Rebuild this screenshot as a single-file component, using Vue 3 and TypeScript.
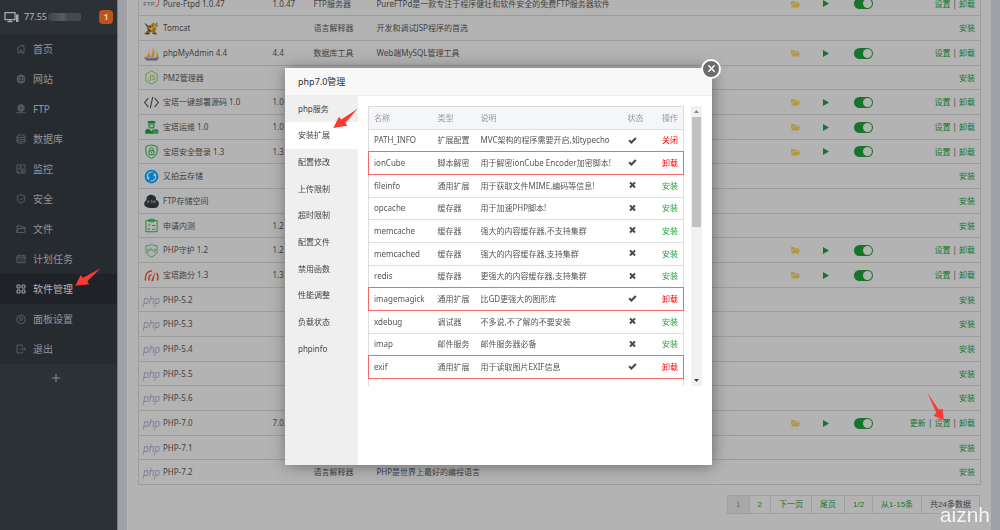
<script setup lang="ts">
interface NavItem { label: string; icon: string; active?: boolean }
interface Software {
  name: string
  icon: string
  version?: string
  type?: string
  desc?: string
  installed?: boolean
  update?: boolean
}
interface Extension { name: string; type: string; desc: string; on: boolean; action: string; marked?: boolean }

const navIcons: Record<string, string> = {
  home: '<path d="M1.500 9.500 10 2l3.500 3V2.800h2V7l3 2.500M4 8.500V18h4v-5h4v5h4V8.500"/>',
  globe: '<circle cx="10" cy="10" r="8"/><ellipse cx="10" cy="10" rx="3.800" ry="8"/><path d="M2 10h16M3.500 5.500h13M3.500 14.500h13"/>',
  ftp: '<circle cx="10" cy="8" r="6.500"/><ellipse cx="10" cy="8" rx="3" ry="6.500"/><path d="M3.500 8h13M5 4.500h10M5 11.500h10M10 15v3M0.500 17.500h19"/>',
  database: '<ellipse cx="10" cy="4.500" rx="8" ry="2.800"/><path d="M2 4.500v11c0 4 16 4 16 0v-11M2 8.500c0 3.500 16 3.500 16 0M2 12.200c0 3.500 16 3.500 16 0"/>',
  monitor: '<path d="M2 2h16v16H2zM4 10h3l2-5 3 9 2-4h2M4 15.500h3M10 15.500h6"/>',
  shield: '<path d="M10 1.500 17.500 4v6c0 4-3.500 7-7.500 8.500C6 17 2.500 14 2.500 10V4zM6.500 9.500 9.500 12.500 14.500 7"/>',
  folder: '<path d="M2 17V3.500h6l2 2.500h7v3M2 17 4.500 9H19l-2 8z"/>',
  calendar: '<path d="M2 3.500h16v14H2zM2 7.500h16M6 1.500v4M14 1.500v4M5 11h2M9 11h2M13 11h2M5 14.500h2M9 14.500h2M13 14.500h2"/>',
  apps: '<path d="M2 2h6v6H2zM12 2h6v6h-6zM2 12h6v6H2zM12 12h6v6h-6z"/>',
  gear: '<circle cx="10" cy="10" r="3"/><path d="m8.500 1.500h3l.5 2.500 2 .8 2-1.300 2 2-1.300 2 .8 2 2 .5v2l-2 .5-.8 2 1.300 2-2 2-2-1.300-2 .8-.5 2h-3l-.5-2-2-.8-2 1.300-2-2 1.300-2-.8-2-2-.5v-2l2-.5.8-2-1.300-2 2-2 2 1.300 2-.8z"/>',
  exit: '<path d="M13 5V2H2v16h11v-3M8 10h11M15.500 6.500 19 10l-3.500 3.500"/>',
}

const nav: NavItem[] = [
  { label: '首页', icon: 'home' },
  { label: '网站', icon: 'globe' },
  { label: 'FTP', icon: 'ftp' },
  { label: '数据库', icon: 'database' },
  { label: '监控', icon: 'monitor' },
  { label: '安全', icon: 'shield' },
  { label: '文件', icon: 'folder' },
  { label: '计划任务', icon: 'calendar' },
  { label: '软件管理', icon: 'apps', active: true },
  { label: '面板设置', icon: 'gear' },
  { label: '退出', icon: 'exit' },
]

const appIcons: Record<string, string> = {
  tomcat: '<path d="M2 4l5 3 5-1 3-4 2 3 4-3 1 6-3 4-1 5 4 4h-5l-3-4-4 1-3 4H2l4-6-1-5z" fill="#8c6a2c"/><path d="M15 5l3 1 2-1v4l-3 2-3-2zM8 11l4-2 3 3-4 3z" fill="#c39a4e"/><path d="M2 4l4 5M1 21l6-6M9 8l2 3M13 19l6 2M15 7v1M19 7v1M7 12l3 5M4 20h5" stroke="#29231b" stroke-width="1.400" fill="none"/>',
  sail: '<path d="M8 4C9 10 7 15 2 18h8zM13 1c2 7 1 12-3 17h6c2-6 0-12-3-17zM18 4c3 5 3 9 1 14h4c0-6-2-10-5-14z" fill="#c08423"/><path d="M0 18c8 2 15 1 24 0l-3 5H4z" fill="#4c587b"/><path d="M3 20.500h18" stroke="#8a90a8" fill="none"/>',
  node: '<path d="M12 1.500 21 6.500v11L12 22.500l-9-5v-11z" fill="none" stroke="#6b9a3d" stroke-width="1.600"/><path d="M10.500 7v8.500c0 2-3 2-3.500 0M17.500 9.500c-1-1.500-4-1.500-4 .5s4 1.500 4 3.700-3.500 2.300-4.500.3" fill="none" stroke="#6b9a3d" stroke-width="1.600"/>',
  code: '<path d="M7 5 1 12l6 7M17 5l6 7-6 7M14 3l-4 18" fill="none" stroke="#3e3e3e" stroke-width="1.800"/>',
  worker: '<path d="M6 2l6-1 6 1v3H6zM7 6h10v3c0 6-10 6-10 0zM2 22v-4c0-3 3-4 6-4l4 4 4-4c3 0 6 1 6 4v4z" fill="#17742b"/><path d="M8.500 7h7v2c-1 4-6 4-7 0z" fill="#a3aaa4"/><circle cx="19.500" cy="18.500" r="4" fill="#17742b" stroke="#b3b3b3"/><path d="m17.500 18.500 1.500 1.500 2.500-3" fill="none" stroke="#b3b3b3"/>',
  lock: '<path d="M12 1.500 21 4v8c0 6-5 9-9 11-4-2-9-5-9-11V4zM8 11h8v6H8zM9.500 11V8.500c0-3.500 5-3.500 5 0V11M12 13v2" fill="none" stroke="#278039" stroke-width="1.600"/>',
  upyun: '<circle cx="12" cy="12" r="11" fill="#087bc0"/><path d="M14 5C7 4 3 10 7 16M10 19c7 1 11-5 7-11" fill="none" stroke="#a9c0ce" stroke-width="1.800"/><path d="M4 14l4 4 1-6zM20 10l-4-4-1 6z" fill="#a9c0ce"/>',
  cloud: '<path d="M5 21c-6-1-6-9-1-11C3 3 10 0 14 2c5 1 6 5 5 7 6 2 6 9 2 12-4 2-12 2-16 0z" fill="#292d31"/><path d="M6 11h3M6 13h2M6 11v4M11 11h3M12.500 11v4M16 15v-4h2v2h-2" fill="none" stroke="#999" stroke-width="1"/>',
  clipboard: '<path d="M3 4h18v18H3zM8 2h8v4H8z" fill="none" stroke="#278039" stroke-width="1.500"/><path d="m6 11 1.500 1.500L10 9.500M13 12h5M6 16l3 3M9 16l-3 3M13 18h5" fill="none" stroke="#278039" stroke-width="1.400"/>',
  guard: '<path d="M12 1.500 15 4l6 .5v8c0 5-4 8-9 10-5-2-9-5-9-10v-8L9 4z" fill="none" stroke="#489458" stroke-width="1.600"/><path d="M6 16v-6h2.500c1 0 1 3 0 3H6M11 7v6m0-3c2-1 2.500 0 2.500 3M16 16v-6h2.500c1 0 1 3 0 3H16" fill="none" stroke="#489458" stroke-width="1.200"/>',
  gauge: '<path d="M2.500 20C1 11 6 4 13 5M20 8c3 4 2.500 9 1.500 12M8 20c-1-5 0-8 4-10" fill="none" stroke="#b43b19" stroke-width="2.200"/><path d="M18 5 15 20c-1 2-4 1-3-1z" fill="#b43b19"/>',
}

const software: Software[] = [
  { name: 'Pure-Ftpd 1.0.47', icon: 'ftp', version: '1.0.47', type: 'FTP服务器', desc: 'PureFTPd是一款专注于程序健壮和软件安全的免费FTP服务器软件', installed: true },
  { name: 'Tomcat', icon: 'tomcat', type: '语言解释器', desc: '开发和调试JSP程序的首选' },
  { name: 'phpMyAdmin 4.4', icon: 'sail', version: '4.4', type: '数据库工具', desc: 'Web端MySQL管理工具', installed: true },
  { name: 'PM2管理器', icon: 'node' },
  { name: '宝塔一键部署源码 1.0', icon: 'code', version: '1.0', installed: true },
  { name: '宝塔运维 1.0', icon: 'worker', version: '1.0', installed: true },
  { name: '宝塔安全登录 1.3', icon: 'lock', version: '1.3', installed: true },
  { name: '又拍云存储', icon: 'upyun' },
  { name: 'FTP存储空间', icon: 'cloud' },
  { name: '申请内测', icon: 'clipboard', version: '1.2' },
  { name: 'PHP守护 1.2', icon: 'guard', version: '1.2', installed: true },
  { name: '宝塔跑分 1.3', icon: 'gauge', version: '1.3', installed: true },
  { name: 'PHP-5.2', icon: 'php' },
  { name: 'PHP-5.3', icon: 'php' },
  { name: 'PHP-5.4', icon: 'php' },
  { name: 'PHP-5.5', icon: 'php' },
  { name: 'PHP-5.6', icon: 'php' },
  { name: 'PHP-7.0', icon: 'php', version: '7.0.', installed: true, update: true },
  { name: 'PHP-7.1', icon: 'php' },
  { name: 'PHP-7.2', icon: 'php', type: '语言解释器', desc: 'PHP是世界上最好的编程语言' },
]

const tabs = ['php服务', '安装扩展', '配置修改', '上传限制', '超时限制', '配置文件', '禁用函数', '性能调整', '负载状态', 'phpinfo']
const activeTab = '安装扩展'

const extensions: Extension[] = [
  { name: 'PATH_INFO', type: '扩展配置', desc: 'MVC架构的程序需要开启,如typecho', on: true, action: '关闭' },
  { name: 'ionCube', type: '脚本解密', desc: '用于解密ionCube Encoder加密脚本!', on: true, action: '卸载', marked: true },
  { name: 'fileinfo', type: '通用扩展', desc: '用于获取文件MIME,编码等信息!', on: false, action: '安装' },
  { name: 'opcache', type: '缓存器', desc: '用于加速PHP脚本!', on: false, action: '安装' },
  { name: 'memcache', type: '缓存器', desc: '强大的内容缓存器,不支持集群', on: false, action: '安装' },
  { name: 'memcached', type: '缓存器', desc: '强大的内容缓存器,支持集群', on: false, action: '安装' },
  { name: 'redis', type: '缓存器', desc: '更强大的内容缓存器,支持集群', on: false, action: '安装' },
  { name: 'imagemagick', type: '通用扩展', desc: '比GD更强大的图形库', on: true, action: '卸载', marked: true },
  { name: 'xdebug', type: '调试器', desc: '不多说,不了解的不要安装', on: false, action: '安装' },
  { name: 'imap', type: '邮件服务', desc: '邮件服务器必备', on: false, action: '安装' },
  { name: 'exif', type: '通用扩展', desc: '用于读取图片EXIF信息', on: true, action: '卸载', marked: true },
]
</script>

<template>
  <div class="page">
    <aside class="sidebar">
      <header class="server">
        <svg class="server-icon" viewBox="0 0 30 24"><path d="M2 3h20v14H2zM7 21h10M12 17v4" fill="none" stroke="currentColor" stroke-width="2.500" /><path d="M24 7h5v15h-5z" fill="currentColor" /></svg>
        <span>77.55</span><i class="masked"></i>
        <b class="badge">1</b>
      </header>
      <nav class="menu">
        <a v-for="n in nav" :key="n.label" href="#" :class="{ active: n.active }">
          <svg class="nav-icon" viewBox="0 0 20 20" v-html="navIcons[n.icon]"></svg>
          <span>{{ n.label }}</span>
          <svg v-if="n.active" class="arrow arrow-menu" viewBox="0 0 78 54"><path d="M1 53 17 21l7 8L77 1 37 40l5 9z" /></svg>
        </a>
      </nav>
      <button class="add" type="button" aria-label="添加"><svg viewBox="0 0 10 10"><path d="M5 1v8M1 5h8" /></svg></button>
    </aside>

    <main class="main">
      <section class="panel">
        <table class="soft">
          <colgroup>
            <col class="c-name"><col class="c-ver"><col class="c-type"><col>
            <col class="c-dir"><col class="c-run"><col class="c-show"><col class="c-act">
          </colgroup>
          <tbody>
            <tr v-for="s in software" :key="s.name">
              <td>
                <div class="name">
                  <span v-if="s.icon === 'php'" class="logo-php">php</span>
                  <span v-else-if="s.icon === 'ftp'" class="logo-ftp">FTP<svg viewBox="0 0 6 12"><path d="M1 9c0 3 2 2 3-2l1-6" /></svg></span>
                  <svg v-else class="app-icon" viewBox="0 0 24 24" v-html="appIcons[s.icon]"></svg>
                  <span>{{ s.name }}</span>
                </div>
              </td>
              <td>{{ s.version }}</td>
              <td>{{ s.type }}</td>
              <td>{{ s.desc }}</td>
              <td>
                <button v-if="s.installed" class="icon-btn" type="button" :aria-label="s.name + ' 目录'">
                  <svg class="dir" viewBox="0 0 20 16"><path d="M1 11V2h6l2 2h7v2H6zM6 7h14l-4 8H1z" /></svg>
                </button>
              </td>
              <td>
                <button v-if="s.installed" class="icon-btn" type="button" :aria-label="s.name + ' 运行'">
                  <svg class="run" viewBox="0 0 6 7"><path d="M0 0l6 3.500L0 7z" /></svg>
                </button>
              </td>
              <td><input v-if="s.installed" class="switch" type="checkbox" checked :aria-label="s.name + ' 显示'"></td>
              <td class="act">
                <div class="links">
                  <template v-if="s.update"><a href="#">更新</a> | </template>
                  <template v-if="s.installed"><a href="#">设置</a> | <a href="#">卸载</a></template>
                  <a v-else href="#">安装</a>
                  <svg v-if="s.update" class="arrow arrow-set" viewBox="0 0 52 88"><path d="M1 1 36 54l12-3 3 35-31-14 8-9z" /></svg>
                </div>
              </td>
            </tr>
          </tbody>
        </table>
        <nav class="pager">
          <span class="current">1</span><a href="#">2</a><a href="#">下一页</a><a href="#">尾页</a><span class="green">1/2</span><span class="green">从1-15条</span><span>共24条数据</span>
        </nav>
      </section>
    </main>

    <div class="overlay">
      <div class="dialog" role="dialog" aria-labelledby="dialog-title">
        <h1 id="dialog-title">php7.0管理</h1>
        <button class="close" type="button" aria-label="关闭"><svg viewBox="0 0 10 10"><path d="M1.500 1.500l7 7M8.500 1.500l-7 7" /></svg></button>
        <div class="body">
          <nav class="tabs">
            <button v-for="t in tabs" :key="t" type="button" :class="{ on: t === activeTab }">
              {{ t }}
              <svg v-if="t === activeTab" class="arrow arrow-tab" viewBox="0 0 76 62"><path d="M1 60 18 26l7 8L75 1 38 44l5 9z" /></svg>
            </button>
          </nav>
          <div class="content">
            <div class="list">
              <table class="ext">
                <colgroup><col class="e-name"><col class="e-type"><col><col class="e-state"><col class="e-act"></colgroup>
                <thead><tr><th>名称</th><th>类型</th><th>说明</th><th>状态</th><th class="right">操作</th></tr></thead>
                <tbody>
                  <tr v-for="e in extensions" :key="e.name" :class="{ marked: e.marked }">
                    <td>{{ e.name }}</td><td>{{ e.type }}</td><td>{{ e.desc }}</td>
                    <td>
                      <svg class="state" viewBox="0 0 16 16"><path v-if="e.on" d="M2 7.500l4 4 8-8" /><path v-else d="M3.500 2.500l9 9M12.500 2.500l-9 9" /></svg>
                    </td>
                    <td class="right"><a href="#" :class="{ red: e.on }">{{ e.action }}</a></td>
                  </tr>
                  <tr><td></td><td></td><td></td><td></td><td></td></tr>
                </tbody>
              </table>
            </div>
            <div class="scroll">
              <svg viewBox="0 0 11 11"><path d="M3 7l2.500-3L8 7z" fill="#888" /></svg>
              <div class="thumb"></div>
              <svg viewBox="0 0 11 11"><path d="M3 4l2.500 3L8 4z" fill="#444" /></svg>
            </div>
          </div>
        </div>
      </div>
    </div>
    <div class="watermark">aiznh</div>
  </div>
</template>

<style>
body { margin: 0; overflow: hidden; }
</style>

<style scoped>
.page {
  display: flex;
  height: 100vh;
  overflow: hidden;
  position: relative;
  background: #a0a1a6;
  color: #3f3f3f;
  font: 8px/12px "Noto Sans", "Noto Sans CJK SC", sans-serif;
}
.page *, .page *::before { box-sizing: border-box; }
a { color: #17752b; text-decoration: none; }
button { font: inherit; color: inherit; border: 0; background: none; padding: 0; }

.sidebar { width: 118px; flex: none; background: #2c3138; border-right: 1px solid #777b82; }
.server { display: flex; align-items: center; height: 34px; padding: 0 4px; font-size: 9px; color: #b5b7b9; }
.server-icon { width: 15px; height: 12px; margin-right: 5px; color: #a9abad; }
.masked { width: 33px; height: 8px; margin-left: 1px; border-radius: 3px; background: linear-gradient(90deg, #3e4348, #585c60 45%, #42474b 60%, #474b50); }
.badge { width: 14px; height: 14px; margin-left: auto; border-radius: 4px; background: #bd521b; color: #d8cac2; line-height: 14px; text-align: center; }
.menu { background: #262b30; }
.menu a { position: relative; display: flex; align-items: center; height: 30px; padding-left: 16px; gap: 7px; color: #92959a; font-size: 10px; }
.menu a.active { background: #1f2227; color: #b3b3b3; }
.nav-icon { width: 10px; height: 10px; fill: none; stroke: #62676c; stroke-width: 1.6; }
.active .nav-icon { stroke: #a2a4a6; stroke-width: 2; }
.add { display: block; width: 100%; height: 26px; padding-right: 6px; }
.add svg { width: 10px; height: 10px; fill: none; stroke: #8c9094; vertical-align: middle; }

.arrow { position: absolute; z-index: 3; fill: #fb3a36; }
.arrow-menu { width: 26px; height: 18px; left: 75px; top: -6px; }
.arrow-tab { width: 25px; height: 21px; left: 48px; top: -14px; }
.arrow-set { width: 17px; height: 29px; right: 31px; bottom: 8px; }

.main { flex: 1; min-width: 0; padding: 0 9px; }
.panel { display: flow-root; min-height: 100%; padding: 0 10px; background: #b3b3b3; border-left: 1px solid #b8b8b8; }
table { border-collapse: collapse; table-layout: fixed; width: 100%; }
.soft { margin-top: -9px; border: 1px solid #9c9c9c; }
.soft tr { height: 25px; }
.soft tr:nth-child(3n + 1) { height: 24px; }
.soft td { padding: 0 5px; border-bottom: 1px solid #9c9c9c; white-space: nowrap; }
.c-name { width: 129px; }
.c-ver { width: 41px; }
.c-type { width: 63px; }
.c-dir { width: 33px; }
.c-run { width: 31px; }
.c-show { width: 40px; }
.c-act { width: 92px; }
.name { display: flex; align-items: center; gap: 4px; }
.app-icon { width: 15px; height: 15px; }
.logo-php { width: 15px; font: italic 300 10px/12px "Noto Sans", sans-serif; color: #636990; display: flex; justify-content: center; }
.logo-ftp { width: 15px; display: flex; justify-content: center; color: #555; font: 6px/12px "Liberation Sans", sans-serif; }
.logo-ftp svg { width: 5px; height: 10px; flex: none; fill: none; stroke: #b24840; }
.icon-btn { display: block; }
.icon-btn svg { display: block; }
.dir { width: 11px; height: 8px; fill: #b2983e; }
.run { width: 6px; height: 7px; fill: #17752b; }
.switch { appearance: none; display: block; position: relative; width: 19px; height: 11px; margin: 0; border-radius: 6px; background: #17752b; }
.switch::before { content: ""; position: absolute; top: 1px; right: 1px; width: 9px; height: 9px; border-radius: 50%; background: #b3b3b3; }
.links { position: relative; text-align: right; }

.pager { display: flex; justify-content: flex-end; margin: 10px 1px 0; font-family: "Liberation Sans", "Noto Sans CJK SC", sans-serif; }
.pager > * { height: 19px; padding: 0 8px; border: 1px solid #9f9f9f; border-left-width: 0; line-height: 18px; }
.pager .current { border-left-width: 1px; background: #a8a8a8; color: #6c6c6c; }
.green { color: #17752b; }

.overlay { position: fixed; inset: 0; display: flex; align-items: center; justify-content: center; padding: 2px 3px 0 0; }
.dialog { position: relative; width: 427px; max-width: 95%; background: #fff; color: #555; box-shadow: 1px 1px 16px rgba(0, 0, 0, .4); border-radius: 1px; }
.dialog h1 { margin: 0; padding: 0 13px; font-size: 9px; font-weight: 400; line-height: 27px; color: #333; background: #f8f8f8; border-bottom: 1px solid #eee; }
.close { position: absolute; top: -9px; right: -9px; width: 20px; height: 20px; border: 2px solid #fff; border-radius: 50%; background: #6c6c6c; display: grid; place-items: center; }
.close svg { width: 9px; height: 9px; stroke: #fff; stroke-width: 1.6; }
.body { display: flex; }
.tabs { width: 73px; min-height: 369px; flex: none; background: #efefef; }
.tabs button { position: relative; display: block; width: 100%; height: 27px; padding: 0 13px; text-align: left; color: #444; }
.tabs button:nth-child(3n + 1) { height: 26px; }
.tabs button.on { background: #fff; }
.content { flex: 1; min-width: 0; display: flex; align-items: flex-start; gap: 7px; padding: 10px; }
.list { flex: 1; min-width: 0; height: 280px; overflow: hidden; }
.ext { border: 1px solid #ddd; }
.ext tr { height: 23px; }
.ext tbody tr:nth-child(3n + 1) { height: 22px; }
.ext th, .ext td { padding: 0 5px; border-bottom: 1px solid #ddd; text-align: left; white-space: nowrap; font-weight: 400; }
.ext th { background: #f5f6fa; color: #999; }
.ext .right { text-align: right; }
.ext a { color: #20a53a; }
.ext a.red { color: #f00; }
.ext tr.marked td, .ext tr:has(+ .marked) td { border-bottom-color: #f46868; }
.ext .marked td:first-child { border-left: 1px solid #f46868; }
.ext .marked td:last-child { border-right: 1px solid #f46868; }
.e-name { width: 64px; }
.e-type { width: 43px; }
.e-state { width: 33px; }
.e-act { width: 28px; }
.state { display: block; width: 9px; height: 9px; fill: none; stroke: #484848; stroke-width: 3.6; }
.scroll { display: flex; flex-direction: column; width: 11px; height: 280px; background: #f1f1f1; }
.scroll svg { width: 11px; height: 11px; }
.thumb { flex: none; width: 9px; height: 110px; margin: 0 1px auto; background: #c1c1c1; }
.watermark { position: absolute; right: 10px; bottom: 3px; color: #f4f4f4; font: 21px/24px "Liberation Sans", sans-serif; }
</style>
